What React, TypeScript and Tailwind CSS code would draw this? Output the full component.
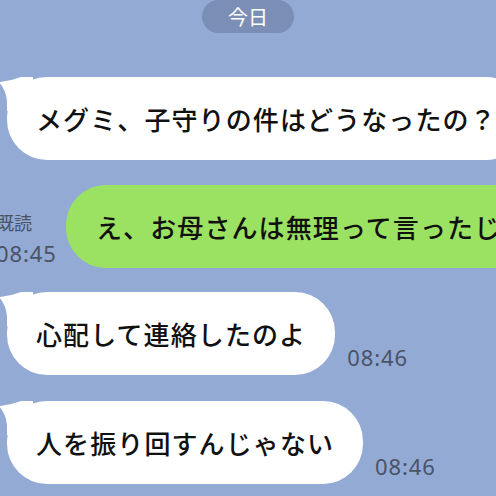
export default function App() {
  const jp = { fontFamily: '"Noto Sans CJK JP", "Noto Sans", sans-serif' };
  const num = { fontFamily: '"Noto Sans", sans-serif' };

  const Tail = () => (
    <svg
      className="absolute left-[-8px] top-0"
      width="34"
      height="34"
      viewBox="0 0 34 34"
    >
      <path d="M8 34 L8 24 Q7 13 0 5 Q12 4 22 0 L34 0 L34 34 Z" fill="#ffffff" />
    </svg>
  );

  const Incoming = ({ text, time, mt }: { text: string; time?: string; mt: string }) => (
    <div className={`flex items-end pl-[7px] ${mt}`}>
      <div className="relative flex h-[83px] shrink-0 items-center whitespace-nowrap rounded-[40px] bg-white px-[29px] text-[26px] font-medium leading-none tracking-[1.1px] text-[#111111]">
        <Tail />
        <span className="relative">{text}</span>
      </div>
      {time && (
        <div className="mb-[7px] ml-[12px] shrink-0 text-[22px] leading-none tracking-[0.9px] text-[#4a5366]" style={num}>
          {time}
        </div>
      )}
    </div>
  );

  return (
    <div className="h-[496px] w-[496px] overflow-hidden bg-[#93aad5]" style={jp}>
      <div className="flex justify-center">
        <div className="flex h-[33px] w-[92px] items-center justify-center rounded-full bg-[#7b8eb5] text-[20px] leading-none text-white">
          今日
        </div>
      </div>

      <Incoming text="メグミ、子守りの件はどうなったの？" mt="mt-[44px]" />

      <div className="ml-[-4px] mt-[25px] flex items-end">
        <div className="mb-[4px] flex w-[70px] shrink-0 flex-col items-start text-[#4a5366]">
          <span className="text-[18px] leading-none">既読</span>
          <span className="mt-[11px] text-[22px] leading-none tracking-[0.9px]" style={num}>
            08:45
          </span>
        </div>
        <div className="flex h-[83px] shrink-0 items-center whitespace-nowrap rounded-[40px] bg-[#9ce262] px-[30px] text-[26px] font-medium leading-none tracking-[1.1px] text-[#111111]">
          え、お母さんは無理って言ったじ
        </div>
      </div>

      <Incoming text="心配して連絡したのよ" time="08:46" mt="mt-[24px]" />
      <Incoming text="人を振り回すんじゃない" time="08:46" mt="mt-[26px]" />
    </div>
  );
}
